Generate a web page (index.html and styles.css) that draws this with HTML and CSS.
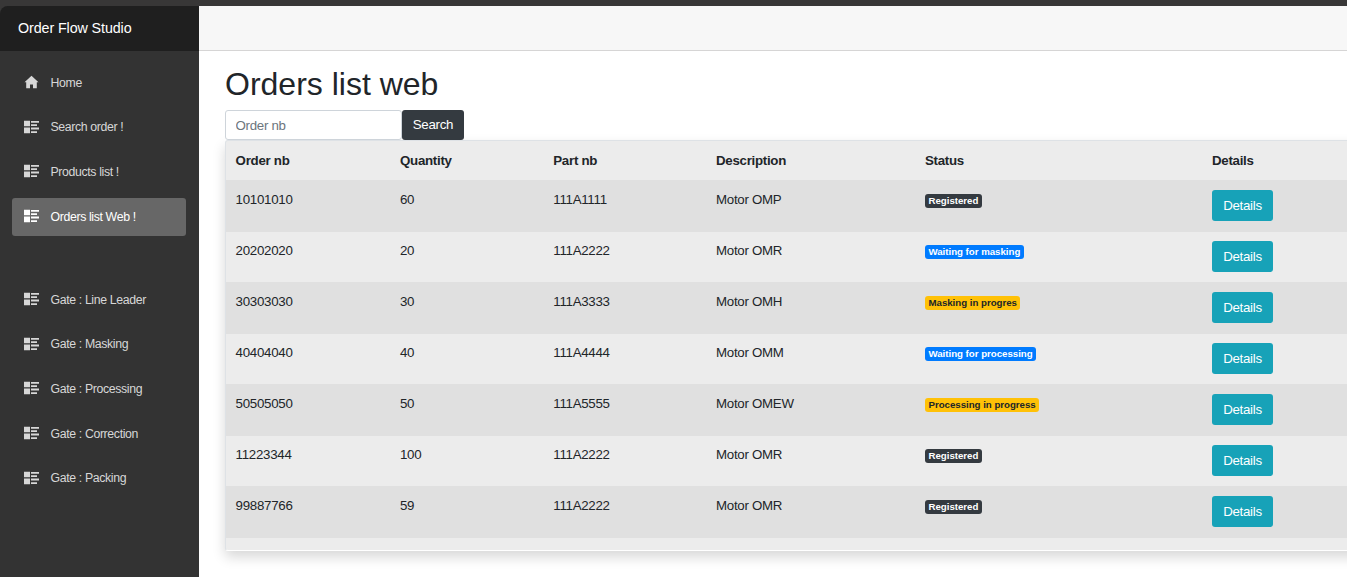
FILE: index.html
```html
<!DOCTYPE html>
<html lang="en">
<head>
<meta charset="utf-8">
<title>Order Flow Studio</title>
<link rel="stylesheet" href="styles.css">
</head>
<body>
<svg width="0" height="0" class="sprite">
  <symbol id="home" viewBox="0 0 15 14"><path d="M7.500 .8 .5 7.200h1.700V13.200H6V9.500h3v3.700h3.800V7.200h1.700z"/></symbol>
  <symbol id="list" viewBox="0 0 15 14"><path d="M0 .8h6v5.400H0zM0 7.500h6V13.200H0zM7 .9h8v1.800H7zM7 4.200h6V6H7zM7 7.600h8V9.400H7zM7 11.200h6V13H7z"/></symbol>
</svg>
<div class="app">
  <aside class="sidebar">
    <div class="brand">Order Flow Studio</div>
    <nav class="nav">
      <a class="nav-link"><svg class="icon"><use href="#home"/></svg><span>Home</span></a>
      <a class="nav-link"><svg class="icon"><use href="#list"/></svg><span>Search order !</span></a>
      <a class="nav-link"><svg class="icon"><use href="#list"/></svg><span>Products list !</span></a>
      <a class="nav-link active"><svg class="icon"><use href="#list"/></svg><span>Orders list Web !</span></a>
    </nav>
    <nav class="nav gates">
      <a class="nav-link"><svg class="icon"><use href="#list"/></svg><span>Gate : Line Leader</span></a>
      <a class="nav-link"><svg class="icon"><use href="#list"/></svg><span>Gate : Masking</span></a>
      <a class="nav-link"><svg class="icon"><use href="#list"/></svg><span>Gate : Processing</span></a>
      <a class="nav-link"><svg class="icon"><use href="#list"/></svg><span>Gate : Correction</span></a>
      <a class="nav-link"><svg class="icon"><use href="#list"/></svg><span>Gate : Packing</span></a>
    </nav>
  </aside>
  <main class="main">
    <div class="top-row"></div>
    <div class="content">
      <h1 class="title">Orders list web</h1>
      <div class="search">
        <input class="search-input" type="text" placeholder="Order nb">
        <button class="search-btn">Search</button>
      </div>
      <div class="orders">
        <div class="row head"><div>Order nb</div><div>Quantity</div><div>Part nb</div><div>Description</div><div>Status</div><div>Details</div></div>
        <div class="row"><div>10101010</div><div>60</div><div>111A1111</div><div>Motor OMP</div><div><span class="badge dark">Registered</span></div><div><button class="details">Details</button></div></div>
        <div class="row"><div>20202020</div><div>20</div><div>111A2222</div><div>Motor OMR</div><div><span class="badge primary">Waiting for masking</span></div><div><button class="details">Details</button></div></div>
        <div class="row"><div>30303030</div><div>30</div><div>111A3333</div><div>Motor OMH</div><div><span class="badge warning">Masking in progres</span></div><div><button class="details">Details</button></div></div>
        <div class="row"><div>40404040</div><div>40</div><div>111A4444</div><div>Motor OMM</div><div><span class="badge primary">Waiting for processing</span></div><div><button class="details">Details</button></div></div>
        <div class="row"><div>50505050</div><div>50</div><div>111A5555</div><div>Motor OMEW</div><div><span class="badge warning">Processing in progress</span></div><div><button class="details">Details</button></div></div>
        <div class="row"><div>11223344</div><div>100</div><div>111A2222</div><div>Motor OMR</div><div><span class="badge dark">Registered</span></div><div><button class="details">Details</button></div></div>
        <div class="row"><div>99887766</div><div>59</div><div>111A2222</div><div>Motor OMR</div><div><span class="badge dark">Registered</span></div><div><button class="details">Details</button></div></div>
      </div>
    </div>
  </main>
</div>
</body>
</html>
```
FILE: styles.css
```css
* { box-sizing: border-box; }
body {
  margin: 0;
  height: 577px;
  overflow: hidden;
  background: #383737;
  color: #212529;
  font: 13.3px/19px "Liberation Sans", Arial, sans-serif;
  letter-spacing: -0.28px;
}
button, input { font: inherit; letter-spacing: inherit; margin: 0; }
.sprite { display: block; height: 0; }
.app { display: flex; height: 571px; margin-top: 6px; }

.sidebar {
  width: 199px;
  flex: none;
  background: #333;
  border-top-left-radius: 8px;
  overflow: hidden;
}
.brand {
  height: 45px;
  padding-left: 18px;
  background: #1f1f1f;
  color: #fff;
  font-size: 14.3px;
  letter-spacing: -0.1px;
  line-height: 44px;
}
.nav {
  display: flex;
  flex-direction: column;
  gap: 6.7px;
  padding: 13px 13px 0 12px;
}
.gates { padding-top: 45px; }
.nav-link {
  display: flex;
  align-items: center;
  height: 38px;
  padding-left: 12px;
  border-radius: 3px;
  color: #d7d7d7;
  font-size: 12.3px;
  letter-spacing: -0.36px;
}
.nav-link.active { background: #676767; color: #fff; }
.icon {
  width: 15px;
  height: 14px;
  margin: 0 11.5px 2px 0;
  fill: currentColor;
}

.main { flex: 1; min-width: 0; background: #fff; overflow: hidden; }
.top-row { height: 45px; background: #f7f7f7; border-bottom: 1px solid #d6d5d5; }
.content { padding: 14px 0 0 26px; }
.title { margin: 0 0 6px; font-size: 32px; line-height: 39px; font-weight: 400; letter-spacing: 0; }
.search { display: flex; height: 30px; }
.search-input {
  width: 177px;
  padding: 0 9.500px;
  border: 1px solid #ced4da;
  border-radius: 3px;
  background: #fff;
}
.search-input::placeholder { color: #6c757d; opacity: 1; }
.search-btn {
  width: 62px;
  padding: 0 0 2px;
  border: 0;
  border-radius: 3px;
  background: #343a40;
  color: #fff;
}

.orders {
  width: 1200px;
  height: 411px;
  border: 1px solid #dee2e6;
  border-bottom-color: #fff;
  border-radius: 3px;
  background: #ececec;
  box-shadow: 0 6px 13px rgba(0, 0, 0, .16);
}
.row {
  display: grid;
  grid-template-columns: 164.400px 153.300px 162.700px 209px 287px 1fr;
  height: 50px;
  padding: 9px 0 0 9.600px;
}
.row:nth-child(even) { height: 52px; padding-top: 10px; background: #e0e0e0; }
.row.head { height: 39px; padding-top: 10px; font-weight: 700; }
.badge {
  display: block;
  width: max-content;
  height: 14px;
  margin-top: 4px;
  padding: 0 3.5px;
  border-radius: 3px;
  font-size: 9.7px;
  letter-spacing: -0.02px;
  line-height: 14px;
  font-weight: 700;
}
.dark { background: #343a40; color: #fff; }
.primary { background: #007bff; color: #fff; }
.warning { background: #ffc107; color: #212529; }
.details {
  display: block;
  width: 61px;
  height: 31px;
  padding: 0;
  border: 0;
  border-radius: 3px;
  background: #17a2b8;
  color: #fff;
}
```
